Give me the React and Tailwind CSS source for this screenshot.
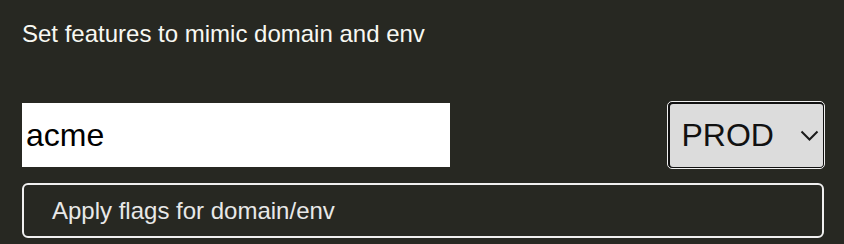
import React from 'react';

export default function App() {
  return (
    <div className="w-[844px] h-[244px] bg-[#272822] px-[22px] pt-[20px] font-['Liberation_Sans',Arial,sans-serif] overflow-hidden">
      <p className="text-[24px] leading-[27px] text-[#f8f8f2]">Set features to mimic domain and env</p>

      <div className="mt-[54px] flex items-center gap-[217px]">
        <input
          type="text"
          defaultValue="acme"
          className="shrink-0 w-[428px] h-[64px] bg-white text-black text-[32px] pl-[4px] outline-none border-0"
        />
        <div className="shrink-0 relative w-[158px] h-[68px] rounded-[5px] border border-[#f0f0f0] bg-[#111]">
          <div className="absolute inset-[1.5px] rounded-[3px] bg-[#dcdcdc] flex items-center pl-[12px]">
            <span className="text-[32px] text-[#111]">PROD</span>
          </div>
          <svg className="absolute left-[132px] top-[28px]" width="19" height="12" viewBox="0 0 19 12" fill="none">
            <path d="M1.5 1.5L9.5 9.5L17.5 1.5" stroke="#1a1a1a" strokeWidth="2" />
          </svg>
        </div>
      </div>

      <button className="mt-[14px] w-[802px] h-[55px] rounded-[6px] border-2 border-[#f0f0f0] text-left pl-[28px] text-[24px] text-[#e8e8e8]">
        Apply flags for domain/env
      </button>
    </div>
  );
}
